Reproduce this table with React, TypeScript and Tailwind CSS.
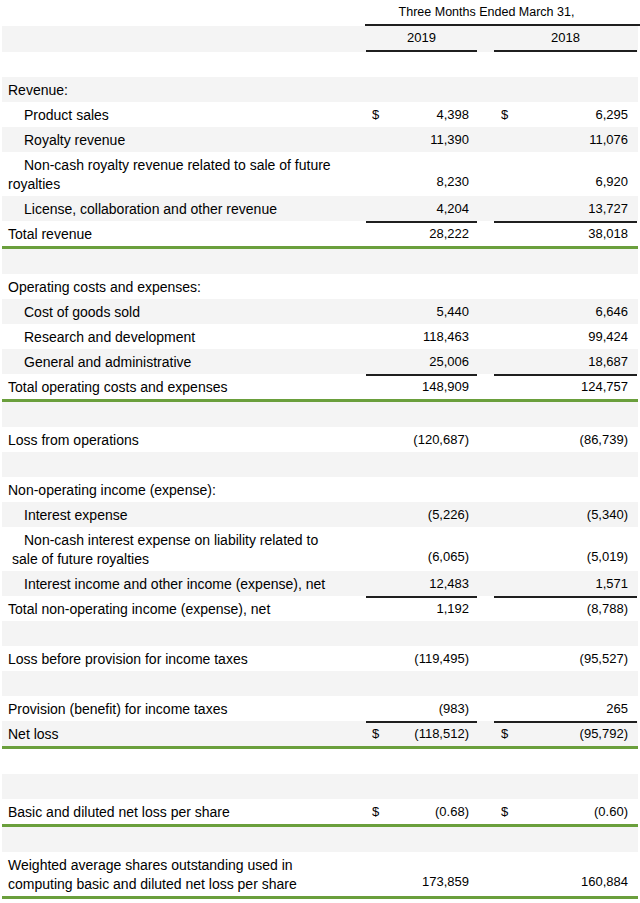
import React from "react";

type Row = {
  label?: string;
  second?: string;
  indent?: boolean;
  wrap?: string;
  a?: string;
  b?: string;
  dollar?: boolean;
  rule?: boolean;
  green?: boolean;
};

const rows: Row[] = [
  {},
  { label: "Revenue:" },
  { label: "Product sales", indent: true, a: "4,398", b: "6,295", dollar: true },
  { label: "Royalty revenue", indent: true, a: "11,390", b: "11,076" },
  {
    label: "Non-cash royalty revenue related to sale of future",
    second: "royalties",
    wrap: "pl-[6px] indent-[16px]",
    a: "8,230",
    b: "6,920",
  },
  { label: "License, collaboration and other revenue", indent: true, a: "4,204", b: "13,727" },
  { label: "Total revenue", a: "28,222", b: "38,018", rule: true, green: true },
  {},
  { label: "Operating costs and expenses:" },
  { label: "Cost of goods sold", indent: true, a: "5,440", b: "6,646" },
  { label: "Research and development", indent: true, a: "118,463", b: "99,424" },
  { label: "General and administrative", indent: true, a: "25,006", b: "18,687" },
  { label: "Total operating costs and expenses", a: "148,909", b: "124,757", rule: true, green: true },
  {},
  { label: "Loss from operations", a: "(120,687)", b: "(86,739)" },
  {},
  { label: "Non-operating income (expense):" },
  { label: "Interest expense", indent: true, a: "(5,226)", b: "(5,340)" },
  {
    label: "Non-cash interest expense on liability related to",
    second: "sale of future royalties",
    wrap: "pl-[10px] indent-[12px]",
    a: "(6,065)",
    b: "(5,019)",
  },
  { label: "Interest income and other income (expense), net", indent: true, a: "12,483", b: "1,571" },
  { label: "Total non-operating income (expense), net", a: "1,192", b: "(8,788)", rule: true },
  {},
  { label: "Loss before provision for income taxes", a: "(119,495)", b: "(95,527)" },
  {},
  { label: "Provision (benefit) for income taxes", a: "(983)", b: "265" },
  { label: "Net loss", a: "(118,512)", b: "(95,792)", dollar: true, rule: true, green: true },
  {},
  {},
  { label: "Basic and diluted net loss per share", a: "(0.68)", b: "(0.60)", dollar: true, green: true },
  {},
  {
    label: "Weighted average shares outstanding used in",
    second: "computing basic and diluted net loss per share",
    wrap: "pl-[6px]",
    a: "173,859",
    b: "160,884",
    green: true,
  },
];

function StatementRow({ row, shade }: { row: Row; shade: boolean }) {
  const tall = !!row.second;
  const rule = row.rule ? "border-t-2 border-[#1f1f1f]" : "border-t-2 border-transparent";
  return (
    <div
      className={`flex ${shade ? "bg-[#f4f4f4]" : "bg-white"} ${
        row.green ? "border-b-[3px] border-[#6a9f3c]" : ""
      }`}
    >
      {tall ? (
        <div className={`w-[364px] text-[14px] pt-[4px] pb-[2px] leading-[19px] ${row.wrap}`}>
          {row.label}
          <br />
          {row.second}
        </div>
      ) : (
        <div className={`w-[364px] h-[25px] pt-[1px] flex items-center text-[14px] ${row.indent ? "pl-[22px]" : "pl-[6px]"}`}>
          {row.label}
        </div>
      )}
      <div className={`w-[111px] flex items-end justify-between pl-[6px] pr-[8px] ${tall ? "pb-[5px]" : "pb-[3px]"} ${rule}`}>
        <span>{row.dollar ? "$" : ""}</span>
        <span>{row.a}</span>
      </div>
      <div className="w-[17px]" />
      <div className={`w-[143px] flex items-end justify-between pl-[7px] pr-[9px] ${tall ? "pb-[5px]" : "pb-[3px]"} ${rule}`}>
        <span>{row.dollar ? "$" : ""}</span>
        <span>{row.b}</span>
      </div>
    </div>
  );
}

export default function App() {
  return (
    <div
      className="w-[640px] h-[903px] bg-white text-black text-[13px] px-[2px] overflow-hidden"
      style={{ fontFamily: '"Liberation Sans", Arial, sans-serif' }}
    >
      {/* Column header */}
      <div className="flex h-[26px] bg-white">
        <div className="w-[363px]" />
        <div className="flex-1 -mr-[2px] flex items-center justify-center border-b-2 border-[#1f1f1f] pr-[32px] text-[12.5px]">
          Three Months Ended March 31,
        </div>
      </div>
      <div className="flex h-[26px] bg-[#f4f4f4]">
        <div className="w-[364px]" />
        <div className="w-[111px] flex items-center justify-center border-b-2 border-[#1f1f1f]">2019</div>
        <div className="w-[17px]" />
        <div className="w-[143px] flex items-center justify-center border-b-2 border-[#1f1f1f]">2018</div>
      </div>

      {rows.map((row, i) => (
        <StatementRow key={i} row={row} shade={i % 2 === 1} />
      ))}
    </div>
  );
}
